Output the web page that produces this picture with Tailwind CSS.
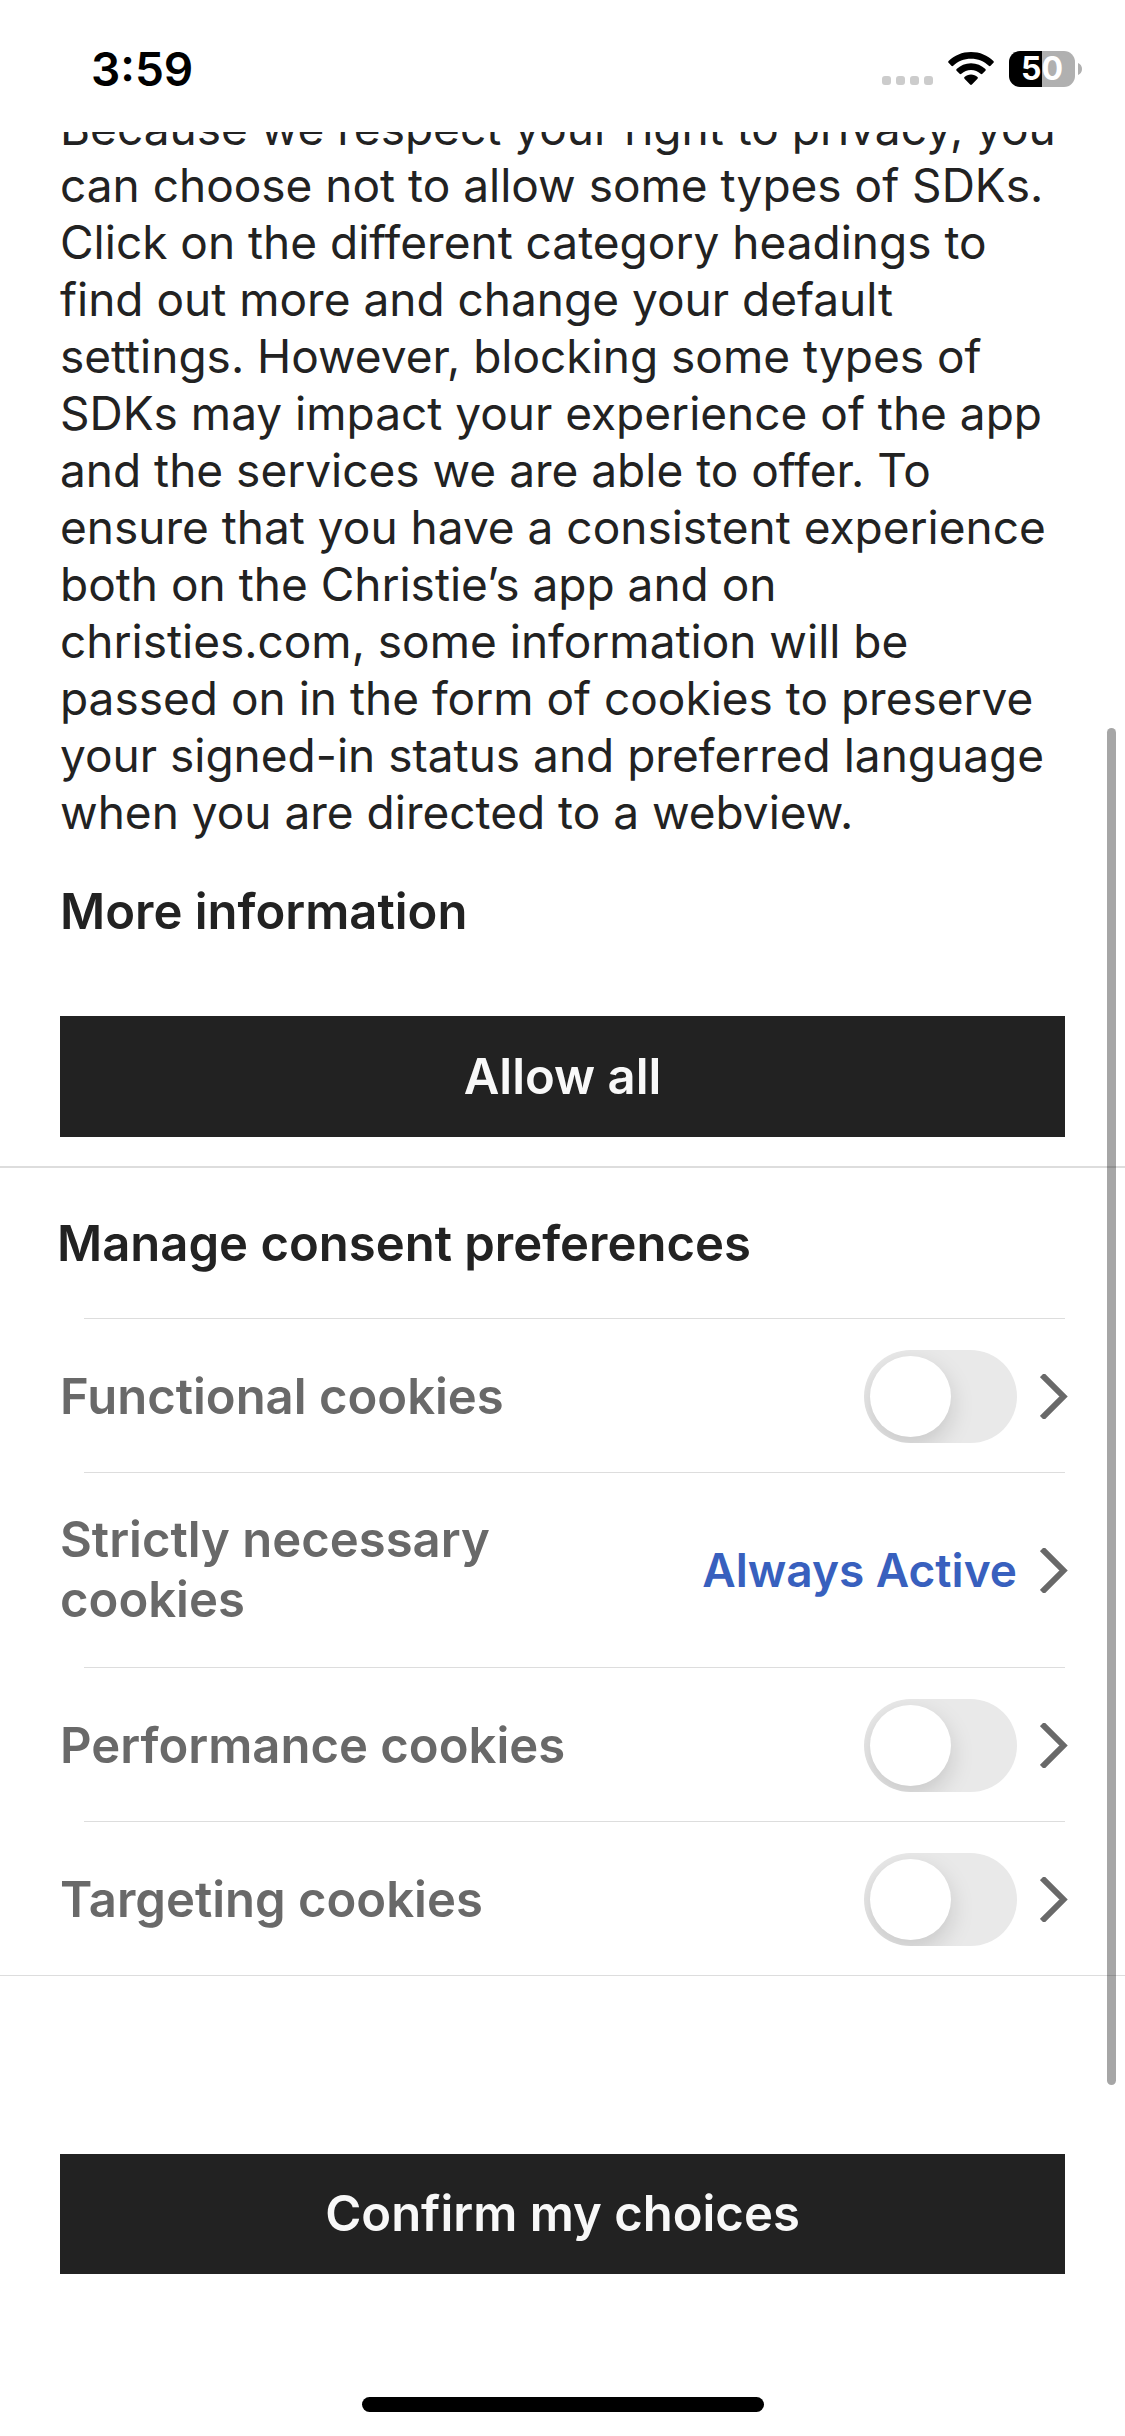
<!DOCTYPE html>
<html lang="en">
<head>
    <meta charset="UTF-8">
    <meta name="viewport" content="width=device-width, initial-scale=1.0">
    <title>Privacy preferences</title>
    <script src="https://cdn.jsdelivr.net/npm/@tailwindcss/browser@4"></script>
    <style>
        body { font-family: Inter, 'Liberation Sans', sans-serif; }
    </style>
</head>
<body class="bg-white text-[#222222]">
    <div class="relative min-h-screen flex flex-col overflow-hidden">
        <!-- Status bar -->
        <header class="h-[132px] shrink-0 flex items-start justify-between pl-[91px] pr-[43px] pt-[40px] text-black">
            <time class="text-[46px] leading-[58px] font-semibold">3:59</time>
            <div class="flex items-center pt-[11px]">
                <svg class="w-[51px] h-[36px] text-[#cccccc]" viewBox="0 0 51 36" fill="currentColor" aria-hidden="true">
                    <rect x="0" y="25" width="9" height="9" rx="3"/>
                    <rect x="14" y="25" width="9" height="9" rx="3"/>
                    <rect x="28" y="25" width="9" height="9" rx="3"/>
                    <rect x="42" y="25" width="9" height="9" rx="3"/>
                </svg>
                <svg class="ml-[15px] w-[46px] h-[36px]" viewBox="0 0 46 36" fill="currentColor" aria-hidden="true">
                    <path d="M23 1C14.200 1 6.300 4.400.600 10a1.300 1.300 0 0 0 0 1.800L3.400 14.700a1.300 1.300 0 0 0 1.800 0C9.800 10.300 16.100 7.700 23 7.700s13.200 2.600 17.800 7a1.300 1.300 0 0 0 1.800 0L45.400 11.800a1.300 1.300 0 0 0 0-1.800C39.700 4.400 31.800 1 23 1Z"/>
                    <path d="M23 12.200c-5.600 0-10.700 2.200-14.400 5.800a1.300 1.300 0 0 0 0 1.800l3 3a1.300 1.300 0 0 0 1.800 0C16 20.400 19.300 18.900 23 18.900s7 1.500 9.600 3.900a1.300 1.300 0 0 0 1.800 0l3-3a1.300 1.300 0 0 0 0-1.800C33.700 14.400 28.600 12.200 23 12.200Z"/>
                    <path d="M23 23.600c-2.500 0-4.800.9-6.500 2.400a1.200 1.200 0 0 0 0 1.700l5.600 5.800a1.300 1.300 0 0 0 1.800 0l5.600-5.800a1.200 1.200 0 0 0 0-1.700C27.800 24.500 25.500 23.600 23 23.600Z"/>
                </svg>
                <div class="ml-[15px] w-[66px] h-[36px] rounded-[11px] bg-linear-to-r from-black from-50% to-[#b0b0b0] to-50% flex items-center justify-center text-white text-[32px] leading-[36px] font-bold">50</div>
                <svg class="ml-[3px] w-[4px] h-[36px] text-[#b0b0b0]" viewBox="0 0 4 36" fill="currentColor" aria-hidden="true">
                    <path d="M0 12c2.500 1 4 3.300 4 6s-1.500 5-4 6Z"/>
                </svg>
            </div>
        </header>

        <!-- Scrolled content -->
        <main class="overflow-hidden">
            <div class="px-[60px]">
                <p class="-mt-[32px] text-[46px] leading-[57px]">Because we respect your right to privacy, you can choose not to allow some types of SDKs. Click on the different category headings to find out more and change your default settings. However, blocking some types of SDKs may impact your experience of the app and the services we are able to offer. To ensure that you have a consistent experience both on the Christie’s app and on christies.com, some information will be passed on in the form of cookies to preserve your signed-in status and preferred language when you are directed to a webview.</p>
                <a href="#" class="block mt-[41px] text-[49px] leading-[60px] font-semibold">More information</a>
                <button type="button" class="block w-full h-[121px] mt-[74px] bg-[#222222] text-[#f8f8f8] text-[49px] leading-[60px] font-semibold">Allow all</button>
            </div>

            <section class="mt-[29px] border-t-2 border-[#dddddd]">
                <h2 class="pl-[57px] pt-[46px] pb-[44px] text-[49px] leading-[60px] font-semibold">Manage consent preferences</h2>
                <ul class="pl-[60px] pr-[57px] text-[#696969] border-b border-[#dddddd]">
                    <li>
                        <div class="ml-[24px] mr-[3px] border-t border-[#dddddd]"></div>
                        <div class="flex items-center pt-[31px] pb-[29px]">
                            <label for="functional" class="text-[49px] leading-[60px] font-semibold">Functional cookies</label>
                            <input type="checkbox" id="functional" role="switch" class="ml-auto shrink-0 appearance-none w-[153px] h-[93px] p-[6px] rounded-full bg-[#e9e9e9] overflow-hidden before:block before:size-[81px] before:rounded-full before:bg-white before:shadow-[0_9px_24px_rgba(0,0,0,0.15)] checked:bg-[#3860be] checked:before:ml-auto">
                            <button type="button" class="ml-[23px] shrink-0" aria-label="Functional cookies details">
                                <svg class="w-[28px] h-[45px]" viewBox="0 0 28 45" fill="none" stroke="#696969" stroke-width="6"><path d="M2 1 23.500 22.500 2 44"/></svg>
                            </button>
                        </div>
                    </li>
                    <li>
                        <div class="ml-[24px] mr-[3px] border-t border-[#dddddd]"></div>
                        <div class="flex items-center py-[37px]">
                            <span class="w-[450px] text-[49px] leading-[60px] font-semibold">Strictly necessary cookies</span>
                            <span class="ml-auto text-[46px] leading-[60px] font-semibold text-[#3860be]">Always Active</span>
                            <button type="button" class="ml-[23px] shrink-0" aria-label="Strictly necessary cookies details">
                                <svg class="w-[28px] h-[45px]" viewBox="0 0 28 45" fill="none" stroke="#696969" stroke-width="6"><path d="M2 1 23.500 22.500 2 44"/></svg>
                            </button>
                        </div>
                    </li>
                    <li>
                        <div class="ml-[24px] mr-[3px] border-t border-[#dddddd]"></div>
                        <div class="flex items-center pt-[31px] pb-[29px]">
                            <label for="performance" class="text-[49px] leading-[60px] font-semibold">Performance cookies</label>
                            <input type="checkbox" id="performance" role="switch" class="ml-auto shrink-0 appearance-none w-[153px] h-[93px] p-[6px] rounded-full bg-[#e9e9e9] overflow-hidden before:block before:size-[81px] before:rounded-full before:bg-white before:shadow-[0_9px_24px_rgba(0,0,0,0.15)] checked:bg-[#3860be] checked:before:ml-auto">
                            <button type="button" class="ml-[23px] shrink-0" aria-label="Performance cookies details">
                                <svg class="w-[28px] h-[45px]" viewBox="0 0 28 45" fill="none" stroke="#696969" stroke-width="6"><path d="M2 1 23.500 22.500 2 44"/></svg>
                            </button>
                        </div>
                    </li>
                    <li>
                        <div class="ml-[24px] mr-[3px] border-t border-[#dddddd]"></div>
                        <div class="flex items-center pt-[31px] pb-[29px]">
                            <label for="targeting" class="text-[49px] leading-[60px] font-semibold">Targeting cookies</label>
                            <input type="checkbox" id="targeting" role="switch" class="ml-auto shrink-0 appearance-none w-[153px] h-[93px] p-[6px] rounded-full bg-[#e9e9e9] overflow-hidden before:block before:size-[81px] before:rounded-full before:bg-white before:shadow-[0_9px_24px_rgba(0,0,0,0.15)] checked:bg-[#3860be] checked:before:ml-auto">
                            <button type="button" class="ml-[23px] shrink-0" aria-label="Targeting cookies details">
                                <svg class="w-[28px] h-[45px]" viewBox="0 0 28 45" fill="none" stroke="#696969" stroke-width="6"><path d="M2 1 23.500 22.500 2 44"/></svg>
                            </button>
                        </div>
                    </li>
                </ul>
            </section>
        </main>

        <!-- Pinned action -->
        <footer class="mt-auto px-[60px] pt-[60px] pb-[24px]">
            <button type="button" class="block w-full h-[120px] bg-[#222222] text-[#f8f8f8] text-[49px] leading-[60px] font-semibold">Confirm my choices</button>
            <div class="mt-[123px] mx-auto w-[402px] h-[15px] rounded-full bg-black"></div>
        </footer>

        <!-- Scroll indicator -->
        <div class="absolute right-[9px] top-[728px] w-[9px] h-[1357px] rounded-full bg-black/35"></div>
    </div>
</body>
</html>
